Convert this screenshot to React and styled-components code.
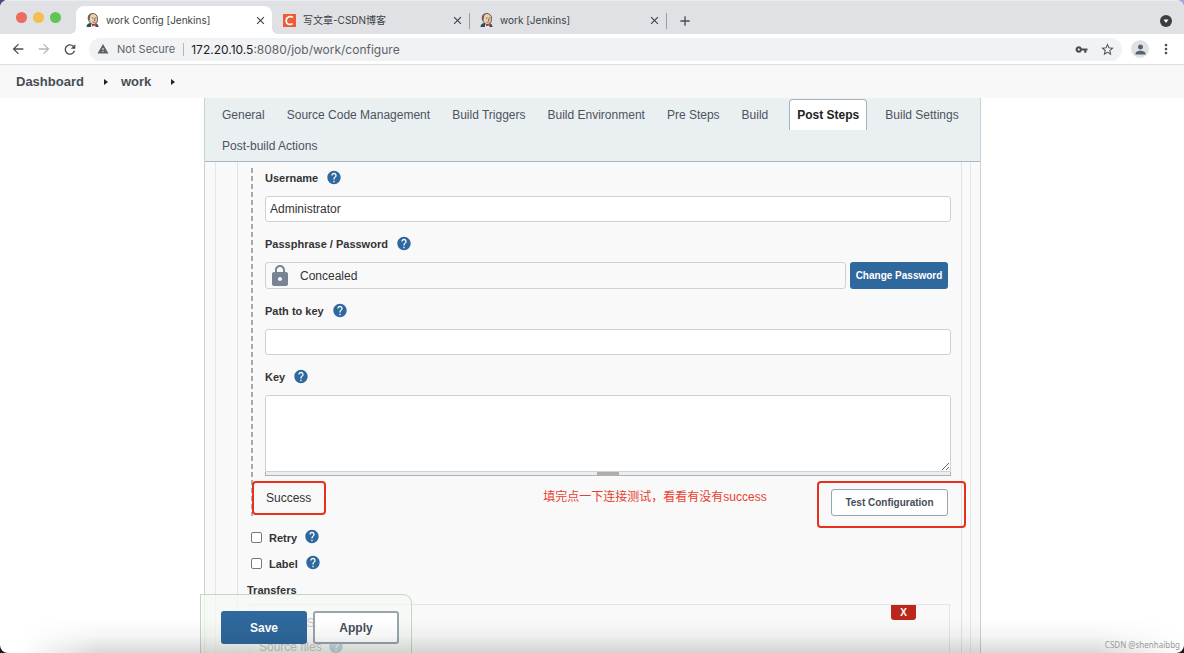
import { useState } from "react";
import styled, { createGlobalStyle, css } from "styled-components";
import {
  MdAdd,
  MdArrowBack,
  MdArrowForward,
  MdClose,
  MdHelp,
  MdLock,
  MdMoreVert,
  MdPerson,
  MdRefresh,
  MdStarBorder,
  MdVpnKey,
  MdWarning,
} from "react-icons/md";

const GlobalStyle = createGlobalStyle`
  * {
    box-sizing: border-box;
  }
  body {
    margin: 0;
    background: linear-gradient(to right, #434c80, #a5a9d9) top / 100% 50% no-repeat #1c1718;
    font-family: "Liberation Sans", Arial, "Noto Sans CJK SC", sans-serif;
    font-size: 12px;
    color: #333;
  }
  button, input, textarea {
    font-family: inherit;
    margin: 0;
  }
  button {
    cursor: pointer;
  }
`;

const Window = styled.div`
  position: relative;
  display: flex;
  flex-direction: column;
  height: 100vh;
  overflow: hidden;
  background: #fff;
  border-radius: 8px;
`;

/* ---------- browser ---------- */

const TabStrip = styled.div`
  display: flex;
  align-items: flex-end;
  flex: none;
  height: 34px;
  padding-right: 12px;
  background: #dfe1e5;
  border-top: 1px solid #ebecee;
  font-family: Inter, "Noto Sans CJK SC", sans-serif;
`;

const Lights = styled.div`
  display: flex;
  align-items: center;
  gap: 6px;
  width: 76px;
  height: 33px;
  padding-left: 16px;
`;

const Light = styled.span`
  width: 11px;
  height: 11px;
  border-radius: 50%;
  background: ${(props) => props.$color};
`;

const BrowserTab = styled.div`
  position: relative;
  display: flex;
  align-items: center;
  gap: 7px;
  width: 196px;
  height: 28px;
  padding: 0 5px 0 10px;
  border-radius: 8px 8px 0 0;
  font-size: 10px;
  color: #3c3f43;
  background: ${(props) => (props.$active ? "#fff" : "none")};

  /* the little feet of the selected tab */
  ${(props) =>
    props.$active &&
    css`
      &::before,
      &::after {
        content: "";
        position: absolute;
        bottom: 0;
        width: 6px;
        height: 6px;
      }
      &::before {
        left: -6px;
        background: radial-gradient(circle at 0 0, transparent 6px, #fff 6px);
      }
      &::after {
        right: -6px;
        background: radial-gradient(circle at 100% 0, transparent 6px, #fff 6px);
      }
    `}
`;

const TabTitle = styled.span`
  flex: 1;
  line-height: 14px;
  white-space: nowrap;
`;

const IconButton = styled.button`
  display: flex;
  align-items: center;
  justify-content: center;
  flex: none;
  width: ${(props) => props.$size || 16}px;
  height: ${(props) => props.$size || 16}px;
  padding: 0;
  border: none;
  border-radius: 50%;
  background: ${(props) => props.$bg || "none"};
  color: ${(props) => props.$color || "#4b4e52"};
`;

const TabDivider = styled.span`
  align-self: center;
  width: 1px;
  height: 16px;
  margin-top: 7px;
  background: ${(props) => (props.$hidden ? "none" : "#9a9da1")};
`;

const NewTab = styled(IconButton)`
  align-self: center;
  margin: 6px auto 0 10px;
`;

const TabMenu = styled(IconButton)`
  align-self: center;
  margin-top: 6px;
`;

const Toolbar = styled.div`
  display: flex;
  align-items: center;
  flex: none;
  height: 31px;
  padding: 0 10px;
  border-bottom: 1px solid #dcdee2;
  font-family: Inter, sans-serif;
`;

const NavButtons = styled.div`
  display: flex;
  gap: 10px;
  width: 79px;
`;

const Omnibox = styled.div`
  display: flex;
  align-items: center;
  flex: 1;
  gap: 8px;
  height: 23px;
  padding: 0 7px 0 8px;
  border-radius: 12px;
  background: #f0f2f4;
  font-size: 11px;
  color: #5f6368;
`;

const Address = styled.div`
  flex: 1;
  padding-left: 7px;
  border-left: 1px solid #b5b8bb;
  font-size: 12px;
  line-height: 13px;

  b {
    font-weight: 400;
    color: #202124;
  }
`;

const PageActions = styled.div`
  display: flex;
  gap: 10px;
`;

const ToolbarEnd = styled.div`
  display: flex;
  align-items: center;
  gap: 9px;
  margin-left: 9px;
`;

/* ---------- jenkins ---------- */

const Breadcrumbs = styled.nav`
  display: flex;
  align-items: center;
  flex: none;
  height: 33px;
  padding: 0 16px;
  background: #f8f8f8;
  font-size: 13px;
  font-weight: 700;

  a {
    color: #454e58;
    text-decoration: none;
  }
`;

const Arrow = styled.span`
  width: 0;
  margin: 0 13px 0 20px;
  border: 3px solid transparent;
  border-left: 4px solid #222;
  border-right: none;
`;

const Main = styled.main`
  position: relative;
  flex: 1;
  min-height: 0;
  margin: 0 203px 0 204px;
`;

const Panel = styled.div`
  display: flex;
  flex-direction: column;
  height: 100%;
  overflow: hidden;
  border: 1px solid #ccd0d4;
  border-width: 0 1px;
  background: #f9f9f9;
`;

const ConfigTabs = styled.div`
  display: flex;
  flex-wrap: wrap;
  flex: none;
  height: 64px;
  padding: 1px 6px 0;
  background: #eaeff2;
  border-bottom: 1px solid #a9b8c4;
`;

const ConfigTab = styled.button`
  height: 31px;
  padding: 0 ${(props) => (props.$active ? 7 : 10)}px;
  margin: ${(props) => (props.$active ? "0 7px 0 10px" : 0)};
  border: 1px solid transparent;
  border-bottom: none;
  background: none;
  font-size: 12px;
  color: #4d545d;

  ${(props) =>
    props.$active &&
    css`
      border-color: #a9b3bd;
      border-radius: 4px 4px 0 0;
      background: #fff;
      font-weight: 700;
      color: #222;
    `}
`;

const Outer = styled.div`
  flex: 1;
  margin: 0 9px 0 10px;
  border: 1px solid #e6e6e6;
  border-width: 0 1px;
`;

const Inner = styled.div`
  height: 100%;
  margin: 0 8px 0 21px;
  padding: 6px 10px 0 9px;
  border: 1px solid #e2e2e2;
  border-width: 0 1px;
`;

const Server = styled.div`
  margin-left: 4px;
  padding: 1px 0 0 14px;
  height: 348px;
  background: repeating-linear-gradient(#aaa 0 5px, transparent 5px 8px) left
    / 2px 100% no-repeat;
`;

const Field = styled.div`
  margin-bottom: 13px;
`;

const LabelRow = styled.div`
  display: flex;
  align-items: center;
  gap: 8px;
  height: 18px;
  margin-bottom: 9px;
  font-size: 11px;
  font-weight: 700;
`;

const HelpButton = styled(IconButton)`
  margin-bottom: 2px;
  color: #2f689d;
`;

const control = css`
  border: 1px solid #cfd0d1;
  border-radius: 3px;
  font-size: 12px;
  color: #333;
  outline: none;
`;

const TextInput = styled.input`
  ${control}
  display: block;
  width: 100%;
  height: 26px;
  padding: 0 4px;
  background: #fff;
`;

const KeyArea = styled.textarea`
  ${control}
  display: block;
  width: 100%;
  height: 77px;
  padding: 4px;
  border-radius: 3px 3px 0 0;
  background: #fff;
  resize: vertical;
`;

const ResizeBar = styled.div`
  display: flex;
  justify-content: center;
  height: 4px;
  background: #eaeff2;
  border: 1px solid #a9b3bd;
  border-top: none;

  &::after {
    content: "";
    width: 22px;
    height: 3px;
    background: #adadad;
  }
`;

const SecretRow = styled.div`
  display: flex;
  gap: 4px;
  padding-right: 3px;
`;

const Secret = styled.div`
  ${control}
  display: flex;
  align-items: center;
  flex: 1;
  gap: 8px;
  height: 27px;
  padding: 0 2px;

  svg {
    color: #788494;
  }
`;

const Button = styled.button`
  height: ${(props) => (props.$large ? 33 : 27)}px;
  width: ${(props) => props.$width}px;
  padding: 0;
  border-radius: 3px;
  font-size: ${(props) => (props.$large ? 12 : 10)}px;
  font-weight: 700;
  white-space: nowrap;
  border: ${(props) => (props.$large ? 2 : 1)}px solid #98a5b1;
  background: #fff;
  color: #454e58;

  ${(props) =>
    props.$primary &&
    css`
      border: none;
      background: #2f689d;
      color: #fff;
    `}
`;

const TestRow = styled.div`
  display: flex;
  align-items: flex-start;
  padding: 0 3px 0 1px;
`;

/* red frame drawn over the page around its child */
const Marked = styled.div`
  position: relative;
  margin-top: ${(props) => props.$top}px;

  &::after {
    content: "";
    position: absolute;
    inset: ${(props) => props.$inset};
    border: 2px solid #e8301e;
    border-radius: 4px;
    pointer-events: none;
  }
`;

const Note = styled.p`
  flex: 1;
  margin: 12px 0 0 232px;
  line-height: 18px;
  color: #e8402f;
  white-space: nowrap;
`;

const CheckRow = styled.div`
  display: flex;
  align-items: center;
  height: 26px;
  padding-left: 4px;
  font-size: 11px;
  font-weight: 700;

  input {
    appearance: none;
    width: 11px;
    height: 11px;
    border: 1px solid #777;
    border-radius: 2px;
    background: #fff;
  }
  label {
    margin: 2px 7px 0;
  }
`;

const Options = styled.div`
  padding-top: 8px;
`;

const Heading = styled.div`
  line-height: 28px;
  font-size: 11px;
  font-weight: 700;
`;

const Transfer = styled.div`
  margin: 0 1px 0 2px;
  height: 80px;
  padding-left: 9px;
  border: 1px solid #e4e4e4;
`;

const TransferHead = styled.div`
  display: flex;
  align-items: flex-start;
  justify-content: space-between;
  padding-right: 33px;
  line-height: 36px;
`;

const RemoveButton = styled.button`
  width: 25px;
  height: 15px;
  padding: 0;
  border: none;
  border-radius: 0 0 3px 3px;
  background: #ba281c;
  color: #fff;
  font-size: 10px;
  font-weight: 700;
  line-height: 15px;
`;

const TransferField = styled.div`
  display: flex;
  align-items: center;
  gap: 6px;
  height: 12px;
`;

const SaveBar = styled.div`
  position: absolute;
  bottom: 0;
  left: -4px;
  display: flex;
  gap: 6px;
  padding: 16px 12px 9px 20px;
  border: 1px solid #bfd8c8;
  border-bottom: none;
  border-radius: 0 9px 0 0;
  background: rgba(246, 250, 241, 0.75);
`;

const BottomShade = styled.div`
  position: absolute;
  inset: auto 0 0;
  height: 34px;
  background: linear-gradient(rgba(0, 0, 0, 0), rgba(0, 0, 0, 0.04) 50%, rgba(0, 0, 0, 0.15));
  mask-image: linear-gradient(to right, transparent 20px, #000 100px calc(100% - 90px), transparent);
  pointer-events: none;
`;

const Watermark = styled.div`
  position: absolute;
  right: 4px;
  bottom: 2px;
  font-family: "Noto Sans", sans-serif;
  font-size: 8px;
  line-height: 12px;
  color: #999;
`;

function JenkinsIcon() {
  return (
    <svg width="13" height="14" viewBox="0 0 26 28" aria-hidden="true">
      <path d="M1 28c0-5 3-7 7-8h10c4 1 7 3 7 8z" fill="#2f4a63" />
      <path d="M10 20l4 6 5-5v7h-9z" fill="#f4f1ec" />
      <path
        d="M5 10C5 4 9 1 14 1s9 4 9 10c0 8-3 12-8 12S5 18 5 10z"
        fill="#ecd0ad"
        stroke="#40352f"
        strokeWidth="1.6"
      />
      <path d="M4 14C2 6 6 1 12 1 8 4 8 8 7 15z" fill="#6e6158" />
      <path d="M12 10h3M18 10h3M13 18c2 1 4 1 6 0M17 11l1 4h-2" fill="none" stroke="#54453c" strokeWidth="1.5" />
      <path d="M12 22l4 2 5-2v5l-5-2-4 2z" fill="#cf3730" />
    </svg>
  );
}

function CsdnIcon() {
  return (
    <svg width="13" height="13" viewBox="0 0 13 13" aria-hidden="true">
      <rect width="13" height="13" fill="#ee5c36" />
      <path
        d="M10 3.400C8 2 3.600 2.200 3.200 6.600c-.2 4.200 3.900 4.400 6.400 3"
        fill="none"
        stroke="#fff"
        strokeWidth="1.600"
      />
    </svg>
  );
}

function TabMenuIcon() {
  return (
    <svg width="12" height="12" viewBox="0 0 12 12" aria-hidden="true">
      <circle cx="6" cy="6" r="6" fill="#3b3e41" />
      <path d="M3.500 4.500h5L6 8z" fill="#fff" />
    </svg>
  );
}

const browserTabs = [
  { title: "work Config [Jenkins]", icon: <JenkinsIcon />, active: true },
  { title: "写文章-CSDN博客", icon: <CsdnIcon /> },
  { title: "work [Jenkins]", icon: <JenkinsIcon /> },
];

const sections = [
  "General",
  "Source Code Management",
  "Build Triggers",
  "Build Environment",
  "Pre Steps",
  "Build",
  "Post Steps",
  "Build Settings",
  "Post-build Actions",
];

function Help({ topic }) {
  return (
    <HelpButton type="button" aria-label={`Help for ${topic}`}>
      <MdHelp size={17} />
    </HelpButton>
  );
}

function FieldLabel({ id, children }) {
  return (
    <LabelRow>
      <label htmlFor={id}>{children}</label>
      <Help topic={children} />
    </LabelRow>
  );
}

function Browser() {
  return (
    <>
      <TabStrip>
        <Lights>
          <Light $color="#ed6a5e" />
          <Light $color="#f5bf4f" />
          <Light $color="#61c554" />
        </Lights>
        {browserTabs.map((tab) => [
          <BrowserTab key={tab.title} $active={tab.active}>
            {tab.icon}
            <TabTitle>{tab.title}</TabTitle>
            <IconButton aria-label="Close tab" $size={13} $color="#3c3f43">
              <MdClose size={13} />
            </IconButton>
          </BrowserTab>,
          <TabDivider key={`${tab.title} divider`} $hidden={tab.active} />,
        ])}
        <NewTab aria-label="New tab">
          <MdAdd size={16} />
        </NewTab>
        <TabMenu aria-label="Search tabs" $size={12}>
          <TabMenuIcon />
        </TabMenu>
      </TabStrip>
      <Toolbar>
        <NavButtons>
          <IconButton aria-label="Back">
            <MdArrowBack size={16} />
          </IconButton>
          <IconButton aria-label="Forward" $color="#b5b7ba">
            <MdArrowForward size={16} />
          </IconButton>
          <IconButton aria-label="Reload">
            <MdRefresh size={17} />
          </IconButton>
        </NavButtons>
        <Omnibox>
          <MdWarning size={12} />
          <span>Not Secure</span>
          <Address>
            <b>172.20.10.5</b>:8080/job/work/configure
          </Address>
          <PageActions>
            <IconButton aria-label="Passwords">
              <MdVpnKey size={13} />
            </IconButton>
            <IconButton aria-label="Bookmark">
              <MdStarBorder size={15} />
            </IconButton>
          </PageActions>
        </Omnibox>
        <ToolbarEnd>
          <IconButton aria-label="Profile" $size={18} $bg="#dfe1e5" $color="#56606f">
            <MdPerson size={15} />
          </IconButton>
          <IconButton aria-label="Menu">
            <MdMoreVert size={16} />
          </IconButton>
        </ToolbarEnd>
      </Toolbar>
    </>
  );
}

export default function App() {
  const [section, setSection] = useState("Post Steps");
  const [username, setUsername] = useState("Administrator");

  return (
    <>
      <GlobalStyle />
      <Window>
        <Browser />
        <Breadcrumbs>
          <a href="#dashboard">Dashboard</a>
          <Arrow />
          <a href="#work">work</a>
          <Arrow />
        </Breadcrumbs>
        <Main>
          <Panel>
            <ConfigTabs>
              {sections.map((name) => (
                <ConfigTab
                  key={name}
                  $active={name === section}
                  onClick={() => setSection(name)}
                >
                  {name}
                </ConfigTab>
              ))}
            </ConfigTabs>
            <Outer>
              <Inner>
                <Server>
                  <Field>
                    <FieldLabel id="username">Username</FieldLabel>
                    <TextInput
                      id="username"
                      value={username}
                      onChange={(e) => setUsername(e.target.value)}
                    />
                  </Field>
                  <Field>
                    <FieldLabel id="password">Passphrase / Password</FieldLabel>
                    <SecretRow>
                      <Secret>
                        <MdLock size={24} />
                        <span>Concealed</span>
                      </Secret>
                      <Button id="password" $primary $width={98}>
                        Change Password
                      </Button>
                    </SecretRow>
                  </Field>
                  <Field>
                    <FieldLabel id="keypath">Path to key</FieldLabel>
                    <TextInput id="keypath" />
                  </Field>
                  <FieldLabel id="key">Key</FieldLabel>
                  <KeyArea id="key" />
                  <ResizeBar />
                  <TestRow>
                    <Marked $top={15} $inset="-10px -15px -10px -14px">
                      Success
                    </Marked>
                    <Note>填完点一下连接测试，看看有没有success</Note>
                    <Marked $top={13} $inset="-8px -18px -12px -14px">
                      <Button $width={117}>Test Configuration</Button>
                    </Marked>
                  </TestRow>
                </Server>
                <Options>
                  <CheckRow>
                    <input type="checkbox" id="retry" />
                    <label htmlFor="retry">Retry</label>
                    <Help topic="Retry" />
                  </CheckRow>
                  <CheckRow>
                    <input type="checkbox" id="label" />
                    <label htmlFor="label">Label</label>
                    <Help topic="Label" />
                  </CheckRow>
                </Options>
                <Heading>Transfers</Heading>
                <Transfer>
                  <TransferHead>
                    <span>Transfer Set</span>
                    <RemoveButton aria-label="Delete">X</RemoveButton>
                  </TransferHead>
                  <TransferField>
                    <span>Source files</span>
                    <Help topic="Source files" />
                  </TransferField>
                </Transfer>
              </Inner>
            </Outer>
          </Panel>
          <SaveBar>
            <Button $primary $large $width={86}>
              Save
            </Button>
            <Button $large $width={86}>
              Apply
            </Button>
          </SaveBar>
        </Main>
        <BottomShade />
        <Watermark>CSDN @shenhaibbg</Watermark>
      </Window>
    </>
  );
}
